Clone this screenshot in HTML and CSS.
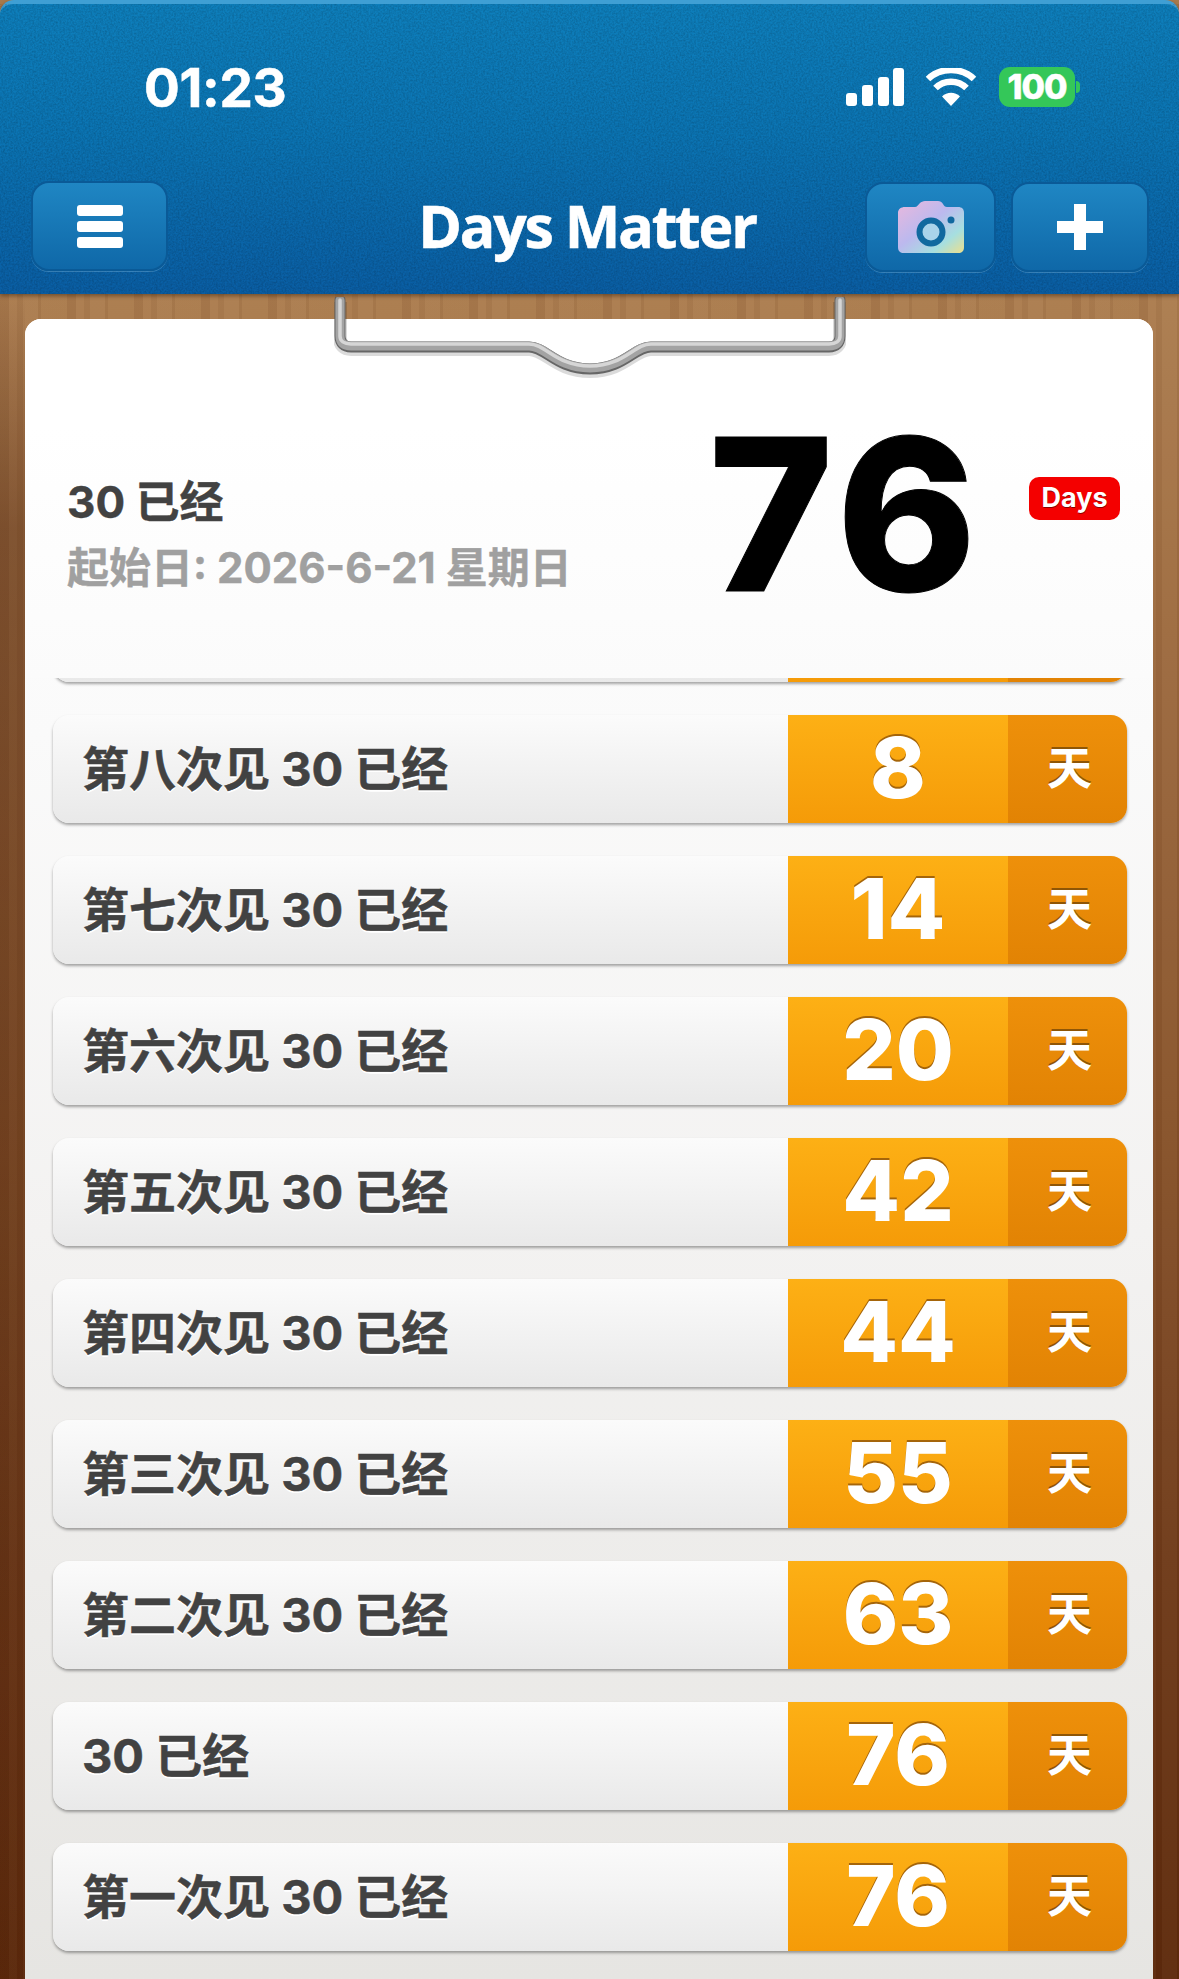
FILE: index.html
```html
<!DOCTYPE html>
<html lang="zh">
<head>
<meta charset="utf-8">
<title>Days Matter</title>
<link rel="stylesheet" href="styles.css">
</head>
<body>
<div class="app">
  <header class="header">
    <svg class="grain" width="1179" height="290"><filter id="noise"><feTurbulence type="fractalNoise" baseFrequency="0.55" numOctaves="2" seed="4"/><feColorMatrix type="matrix" values="0 0 0 0 0  0 0 0 0 0  0 0 0 0 0  1.4 0 0 0 -0.45"/></filter><rect width="1179" height="290" filter="url(#noise)"/></svg>
    <div class="status">
      <span class="time">01:23</span>
      <div class="status-icons">
        <svg class="signal" viewBox="0 0 58 38"><rect x="0" y="25" width="11" height="13" rx="3"/><rect x="16" y="17" width="11" height="21" rx="3"/><rect x="32" y="9" width="11" height="29" rx="3"/><rect x="47" y="0" width="11" height="38" rx="3"/></svg>
        <svg class="wifi" viewBox="0 0 52 38"><path d="M26 38 17 28.500C22 23.500 30 23.500 35 28.500Z"/><path class="arc" d="M10.500 20C19 11.500 33 11.500 41.500 20"/><path class="arc" d="M3 11C15.500-1 36.500-1 49 11"/></svg>
        <div class="battery"><span class="battery-level">100</span><i class="battery-nub"></i></div>
      </div>
    </div>
    <div class="navbar">
      <button class="nav-btn nav-menu"><span class="bars"><i></i><i></i><i></i></span></button>
      <h1 class="title">Days Matter</h1>
      <div class="nav-right">
        <button class="nav-btn nav-cam">
          <svg class="camera" viewBox="0 0 66 52">
            <defs><linearGradient id="cam" x1="0" y1="0" x2="1" y2="1"><stop offset="0" stop-color="#eab8dd"/><stop offset=".45" stop-color="#bcb9ee"/><stop offset=".75" stop-color="#a6dfe0"/><stop offset="1" stop-color="#ecdf8c"/></linearGradient></defs>
            <path fill="url(#cam)" d="M7 6H17C19 6 20 4 22 2 23 1 25 0 27 0H40C42 0 44 1 45 3 46 5 47 6 49 6H60C64 6 66 8 66 12V46C66 50 64 52 60 52H6C2 52 0 50 0 46V12C0 8 3 6 7 6Z"/>
            <circle cx="33" cy="31" r="11.500" fill="#a9d3ea" stroke="#11699f" stroke-width="6"/>
            <circle cx="53" cy="19" r="3.500" fill="#11699f"/>
          </svg>
        </button>
        <button class="nav-btn nav-add">
          <svg class="plus" viewBox="0 0 46 46"><path d="M17 0H29V17H46V29H29V46H17V29H0V17H17Z"/></svg>
        </button>
      </div>
    </div>
  </header>
  <main class="wood">
    <div class="paper">
      <svg class="clip" viewBox="0 0 512 84">
        <path class="clip-shadow" d="M6 3V39C6 46 10 50 17 50H195C212 50 222 72 256 72S300 50 317 50H495C502 50 506 46 506 39V3"/>
        <path class="clip-dark" d="M6 3V39C6 46 10 50 17 50H195C212 50 222 72 256 72S300 50 317 50H495C502 50 506 46 506 39V3"/>
        <path class="clip-mid" d="M6 3V39C6 46 10 49 17 49H195C212 49 222 71 256 71S300 49 317 49H495C502 49 506 46 506 39V3"/>
        <path class="clip-light" d="M6 3V39C6 44 10 47 17 47H195C212 47 222 69 256 69S300 47 317 47H495C502 47 506 44 506 39V3"/>
      </svg>
      <section class="summary">
        <div class="summary-text">
          <div class="summary-name">30 已经</div>
          <div class="summary-date">起始日: 2026-6-21 星期日</div>
        </div>
        <div class="summary-num">76</div>
        <div class="summary-badge">Days</div>
      </section>
      <ul class="list">
        <li class="row"><span class="row-name"></span><span class="row-num"></span><span class="row-unit"></span></li>
        <li class="row"><span class="row-name">第八次见 30 已经</span><span class="row-num">8</span><span class="row-unit">天</span></li>
        <li class="row"><span class="row-name">第七次见 30 已经</span><span class="row-num">14</span><span class="row-unit">天</span></li>
        <li class="row"><span class="row-name">第六次见 30 已经</span><span class="row-num">20</span><span class="row-unit">天</span></li>
        <li class="row"><span class="row-name">第五次见 30 已经</span><span class="row-num">42</span><span class="row-unit">天</span></li>
        <li class="row"><span class="row-name">第四次见 30 已经</span><span class="row-num">44</span><span class="row-unit">天</span></li>
        <li class="row"><span class="row-name">第三次见 30 已经</span><span class="row-num">55</span><span class="row-unit">天</span></li>
        <li class="row"><span class="row-name">第二次见 30 已经</span><span class="row-num">63</span><span class="row-unit">天</span></li>
        <li class="row"><span class="row-name">30 已经</span><span class="row-num">76</span><span class="row-unit">天</span></li>
        <li class="row"><span class="row-name">第一次见 30 已经</span><span class="row-num">76</span><span class="row-unit">天</span></li>
      </ul>
    </div>
  </main>
</div>
</body>
</html>
```
FILE: styles.css
```css
* { box-sizing: border-box; }
html, body { margin: 0; padding: 0; }
body { font-family: Inter, "Noto Sans CJK SC", sans-serif; background: #5a2a0c; }
.app { width: 1179px; height: 1979px; overflow: hidden; display: flex; flex-direction: column; background: #a87a4c; }

.header {
  height: 294px; flex: none; position: relative; z-index: 3;
  border-top: 4px solid #3f9fd4; border-radius: 14px 14px 0 0;
  background: linear-gradient(#0e7fbc, #0b74b3 45%, #0a5ea4);
  box-shadow: 0 2px 4px rgba(40, 20, 0, .45);
  color: #fff;
}
.grain { position: absolute; left: 0; top: 0; opacity: .22; pointer-events: none; }
.status { height: 176px; padding: 54px 99px 0 144px; display: flex; justify-content: space-between; align-items: flex-start; position: relative; }
.time { font: 700 53px/60px Inter, sans-serif; letter-spacing: -.3px; -webkit-text-stroke: .6px #fff; }
.status-icons { display: flex; align-items: center; gap: 21px; margin-top: 9px; }
.signal { width: 58px; height: 38px; fill: #fff; }
.wifi { width: 52px; height: 38px; fill: #fff; }
.wifi .arc { fill: none; stroke: #fff; stroke-width: 6.500px; }
.battery { display: flex; align-items: center; gap: 1px; margin-left: 1px; }
.battery-level { width: 76px; height: 40px; border-radius: 11px; background: #34c759; color: #fff; font: 800 34px/40px Inter, sans-serif; letter-spacing: -1px; text-align: center; -webkit-text-stroke: .5px #fff; }
.battery-nub { width: 4px; height: 12px; background: #34c759; border-radius: 0 4px 4px 0; }

.navbar { display: flex; align-items: center; justify-content: space-between; height: 92px; padding: 0 30px 0 31px; position: relative; }
.title { position: absolute; left: 0; right: 5px; top: 13px; margin: 0; text-align: center; font: 700 59px/64px "Open Sans", sans-serif; letter-spacing: -2.200px; -webkit-text-stroke: .6px #fff; }
.nav-right { display: flex; gap: 15px; }
.nav-btn {
  height: 90px; padding: 0; display: flex; align-items: center; justify-content: center;
  border: 2px solid #0a5a97; border-radius: 18px;
  background: linear-gradient(#1f86c3, #0f68a8);
  box-shadow: 0 1px 0 rgba(120, 180, 220, .4);
}
.nav-menu { width: 137px; }
.nav-cam { width: 131px; margin-top: 2px; }
.nav-add { width: 138px; margin-top: 2px; }
.bars { width: 46px; display: flex; flex-direction: column; gap: 5px; }
.bars i { display: block; height: 11px; background: #fff; border-radius: 3px; }
.camera { width: 66px; height: 52px; }
.plus { width: 46px; height: 46px; fill: #fff; }

.wood {
  flex: 1; min-height: 0; padding: 25px 26px 0 25px;
  background:
    linear-gradient(rgba(50, 15, 0, 0) 0, rgba(50, 15, 0, .3) 14%, rgba(50, 15, 0, .2) 60%, rgba(50, 15, 0, .05) 100%) left top / 25px 100% no-repeat,
    linear-gradient(90deg, rgba(70, 25, 0, .07) 0 9px, rgba(255, 220, 170, .03) 9px 17px, rgba(70, 25, 0, .04) 17px 23px, rgba(255, 220, 170, .04) 23px 38px, rgba(70, 25, 0, .06) 38px 41px, rgba(255, 220, 170, .02) 41px 67px) 0 0 / 67px 100%,
    linear-gradient(#ab7d50, #9c6a40 20%, #85512a 50%, #6d3919 75%, #5c290c 100%);
}
.paper { height: 100%; position: relative; border-radius: 16px 16px 0 0; background: linear-gradient(#fff, #fafafa 25%, #f3f2f1 55%, #e6e5e2 100%); }
.clip { position: absolute; z-index: 2; left: 309px; top: -22px; width: 512px; height: 84px; fill: none; }
.clip-shadow { stroke: rgba(0, 0, 0, .14); stroke-width: 14px; transform: translateY(2px); }
.clip-dark { stroke: #666; stroke-width: 11px; stroke-linecap: round; }
.clip-mid { stroke: #a3a3a3; stroke-width: 9px; stroke-linecap: round; }
.clip-light { stroke: #d6d6d6; stroke-width: 3.500px; stroke-linecap: round; }

.summary {
  height: 359px; position: relative; z-index: 1; display: flex; align-items: flex-start;
  border-radius: 16px 16px 0 0;
  background: linear-gradient(#fff, #fff 30%, #fbfbfb);
  padding-left: 42px;
}
.summary-text { width: 520px; margin-right: 122px; padding-top: 153px; white-space: nowrap; }
.summary-name { font: 700 44px/60px Inter, "Noto Sans CJK SC", sans-serif; color: #424242; -webkit-text-stroke: .4px #424242; }
.summary-date { font: 700 42px/56px Inter, "Noto Sans CJK SC", sans-serif; color: #a0a0a0; margin-top: 8px; -webkit-text-stroke: .4px #a0a0a0; }
.summary-num { width: 320px; font: 800 211px/160px Inter, sans-serif; letter-spacing: 7px; color: #000; margin-top: 116px; -webkit-text-stroke: 1px #000; }
.summary-badge { width: 91px; height: 43px; margin-top: 158px; border-radius: 10px; background: #f40000; color: #fff; font: 700 27px/41px Inter, sans-serif; text-align: center; text-shadow: 0 1px 0 rgba(90, 0, 0, .7); }

.list { list-style: none; margin: -104px 0 0; padding: 0 26px 0 28px; display: flex; flex-direction: column; gap: 33px; }
.row {
  height: 108px; display: grid; grid-template-columns: 735px 220px 1fr; align-items: stretch;
  border-radius: 16px; overflow: hidden;
  box-shadow: 0 2px 3px rgba(0, 0, 0, .35);
}
.row-name {
  display: flex; align-items: center; padding: 0 0 2px 29px;
  background: linear-gradient(#fbfbfb, #e9e9e9);
  color: #424242; font: 700 47px/1 Inter, "Noto Sans CJK SC", sans-serif;
  -webkit-text-stroke: .5px #424242;
  text-shadow: 0 2px 0 #fff;
}
.row-num {
  display: flex; align-items: center; justify-content: center; padding-bottom: 2px;
  background: linear-gradient(#fdb015, #f59b08);
  color: #fff; font: 800 84px/1 Inter, sans-serif; letter-spacing: 0;
  text-shadow: 0 -2px 0 #a5650a;
}
.row-unit {
  display: flex; align-items: center; justify-content: center; padding: 0 0 8px 4px;
  background: linear-gradient(#ee900a, #e28304);
  color: #fff; font: 700 45px/1 "Noto Sans CJK SC", sans-serif;
  text-shadow: 0 -2px 0 #8f5606;
}
```
